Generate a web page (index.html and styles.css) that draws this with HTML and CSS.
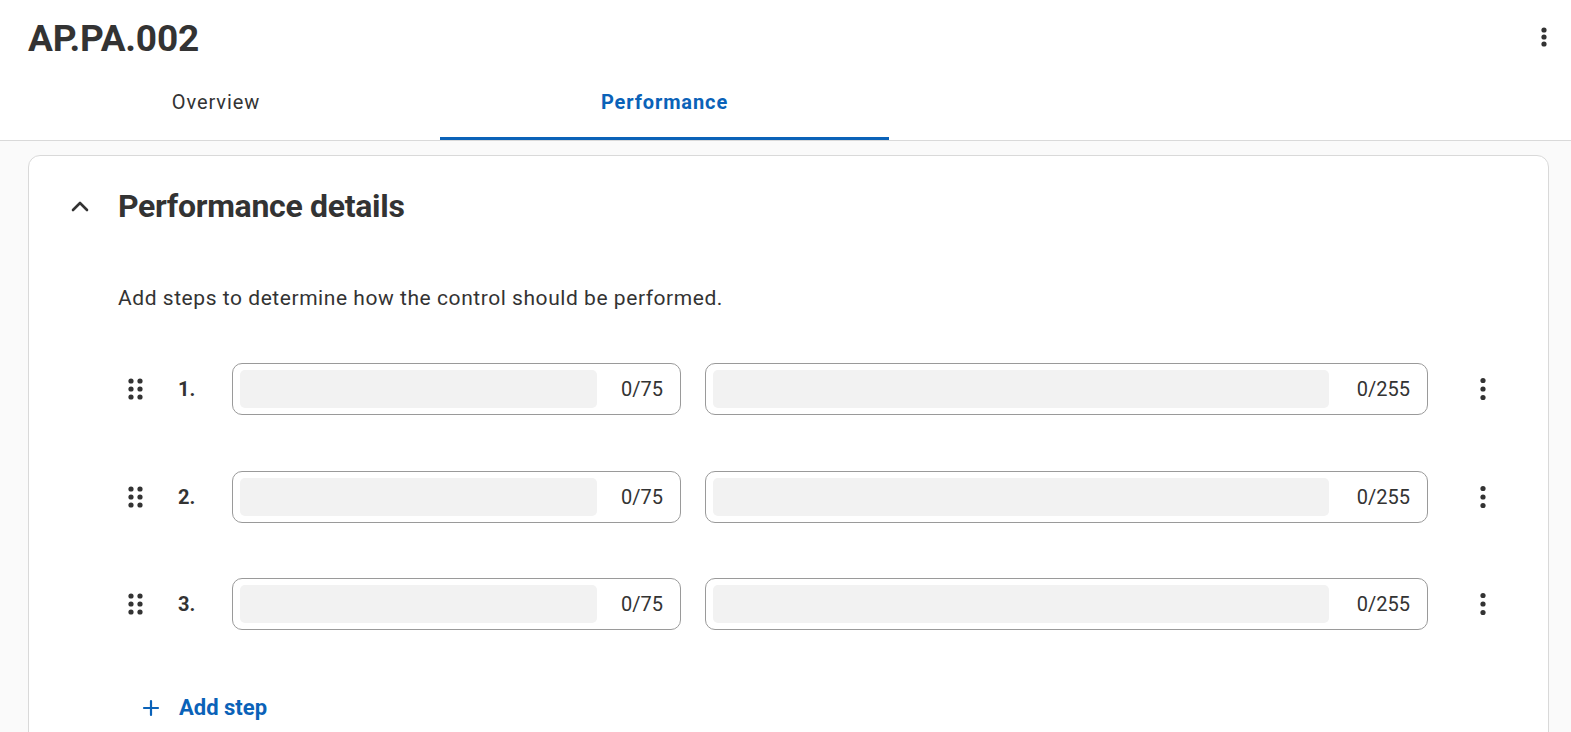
FILE: index.html
```html
<!DOCTYPE html>
<html lang="en">
<head>
<meta charset="utf-8">
<title>AP.PA.002</title>
<link rel="stylesheet" href="styles.css">
</head>
<body>
<header class="page-head">
  <div class="title-row">
    <h1 class="title">AP.PA.002</h1>
    <button class="icon-btn kebab-top" aria-label="More">
      <svg width="24" height="24" viewBox="0 0 24 24"><circle cx="12" cy="5" r="2.6"/><circle cx="12" cy="12" r="2.6"/><circle cx="12" cy="19" r="2.6"/></svg>
    </button>
  </div>
  <nav class="tabs">
    <div class="tab tab-overview">Overview</div>
    <div class="tab tab-active">Performance</div>
  </nav>
</header>
<main class="content">
  <section class="card">
    <div class="card-head">
      <span class="chevron">
        <svg width="24" height="24" viewBox="0 0 24 24"><path d="M5 16 L12 9 L19 16" fill="none" stroke="#333" stroke-width="2.6" stroke-linecap="round" stroke-linejoin="round"/></svg>
      </span>
      <h2 class="card-title">Performance details</h2>
    </div>
    <p class="desc">Add steps to determine how the control should be performed.</p>
    <div class="steps">
      <div class="step">
        <span class="handle"><svg width="20" height="26" viewBox="0 0 20 26"><circle cx="5" cy="5" r="2.6"/><circle cx="14" cy="5" r="2.6"/><circle cx="5" cy="13" r="2.6"/><circle cx="14" cy="13" r="2.6"/><circle cx="5" cy="21" r="2.6"/><circle cx="14" cy="21" r="2.6"/></svg></span>
        <span class="num">1.</span>
        <div class="field field-name"><span class="fill"></span><span class="count">0/75</span></div>
        <div class="field field-desc"><span class="fill"></span><span class="count">0/255</span></div>
        <span class="row-kebab"><svg width="24" height="26" viewBox="0 0 24 26"><circle cx="12" cy="4.5" r="2.6"/><circle cx="12" cy="13" r="2.6"/><circle cx="12" cy="21.5" r="2.6"/></svg></span>
      </div>
      <div class="step">
        <span class="handle"><svg width="20" height="26" viewBox="0 0 20 26"><circle cx="5" cy="5" r="2.6"/><circle cx="14" cy="5" r="2.6"/><circle cx="5" cy="13" r="2.6"/><circle cx="14" cy="13" r="2.6"/><circle cx="5" cy="21" r="2.6"/><circle cx="14" cy="21" r="2.6"/></svg></span>
        <span class="num">2.</span>
        <div class="field field-name"><span class="fill"></span><span class="count">0/75</span></div>
        <div class="field field-desc"><span class="fill"></span><span class="count">0/255</span></div>
        <span class="row-kebab"><svg width="24" height="26" viewBox="0 0 24 26"><circle cx="12" cy="4.5" r="2.6"/><circle cx="12" cy="13" r="2.6"/><circle cx="12" cy="21.5" r="2.6"/></svg></span>
      </div>
      <div class="step">
        <span class="handle"><svg width="20" height="26" viewBox="0 0 20 26"><circle cx="5" cy="5" r="2.6"/><circle cx="14" cy="5" r="2.6"/><circle cx="5" cy="13" r="2.6"/><circle cx="14" cy="13" r="2.6"/><circle cx="5" cy="21" r="2.6"/><circle cx="14" cy="21" r="2.6"/></svg></span>
        <span class="num">3.</span>
        <div class="field field-name"><span class="fill"></span><span class="count">0/75</span></div>
        <div class="field field-desc"><span class="fill"></span><span class="count">0/255</span></div>
        <span class="row-kebab"><svg width="24" height="26" viewBox="0 0 24 26"><circle cx="12" cy="4.5" r="2.6"/><circle cx="12" cy="13" r="2.6"/><circle cx="12" cy="21.5" r="2.6"/></svg></span>
      </div>
    </div>
    <button class="add-step">
      <svg width="18" height="18" viewBox="0 0 18 18"><path d="M9 2 V16 M2 9 H16" stroke="#0a62b8" stroke-width="2.2" stroke-linecap="round"/></svg>
      <span>Add step</span>
    </button>
  </section>
</main>
</body>
</html>
```

FILE: styles.css
```css
* { box-sizing: border-box; }
html, body { margin: 0; padding: 0; }
body {
  font-family: Roboto, "Liberation Sans", Arial, sans-serif;
  color: #333;
  background: #fafafa;
  height: 732px;
  overflow: hidden;
}
.page-head {
  background: #fff;
  border-bottom: 1px solid #d9d9d9;
}
.title-row {
  display: flex;
  align-items: center;
  justify-content: space-between;
  padding: 14px 15px 0 28px;
  height: 64px;
}
.title {
  margin: 0;
  font-size: 37px;
  line-height: 44px;
  font-weight: 700;
  letter-spacing: -0.2px;
  color: #333;
}
.icon-btn {
  border: 0;
  background: none;
  padding: 0;
  width: 24px;
  height: 24px;
  fill: #333;
  margin-top: -4px;
}
.tabs {
  display: flex;
  height: 76px;
  gap: 8px;
}
.tab {
  display: flex;
  align-items: center;
  justify-content: center;
  font-size: 20px;
  letter-spacing: 0.9px;
  color: #333;
  border-bottom: 3px solid transparent;
  padding-top: 2px;
}
.tab-overview { width: 432px; }
.tab-active {
  width: 449px;
  color: #0a62b8;
  font-weight: 700;
  border-bottom-color: #0a62b8;
}
.content {
  padding: 14px 22px 0 28px;
}
.card {
  background: #fff;
  border: 1px solid #d9d9d9;
  border-radius: 12px;
  padding: 30px 0 40px 39px;
  min-height: 600px;
}
.card-head {
  display: flex;
  align-items: center;
  gap: 26px;
  height: 40px;
}
.chevron { width: 24px; height: 24px; display: block; }
.chevron svg { display: block; }
.card-title {
  margin: 0;
  font-size: 32px;
  line-height: 40px;
  font-weight: 700;
  letter-spacing: -0.3px;
  color: #333;
}
.desc {
  margin: 60px 0 0 50px;
  font-size: 21px;
  line-height: 24px;
  letter-spacing: 0.55px;
  color: #333;
}
.steps {
  margin-top: 53px;
  display: flex;
  flex-direction: column;
  gap: 55.5px;
}
.step {
  display: flex;
  align-items: center;
  height: 52px;
  padding-left: 50px;
}
.handle {
  width: 36px;
  flex-shrink: 0;
  display: flex;
  justify-content: center;
  fill: #333;
}
.handle svg, .row-kebab svg { display: block; }
.num {
  width: 78px;
  flex-shrink: 0;
  padding-left: 24px;
  font-size: 20px;
  font-weight: 700;
  color: #333;
}
.field {
  flex-shrink: 0;
  height: 52px;
  border: 1px solid #9a9a9a;
  border-radius: 10px;
  display: flex;
  align-items: center;
  padding: 6px 17px 6px 7px;
}
.field-name { width: 449px; }
.field-desc { width: 723px; margin-left: 24px; }
.fill {
  flex: 1;
  align-self: stretch;
  background: #f2f2f2;
  border-radius: 5px;
}
.count {
  margin-left: 24px;
  font-size: 20px;
  color: #333;
}
.field-desc .count { margin-left: 28px; }
.row-kebab {
  margin-left: 43px;
  width: 24px;
  flex-shrink: 0;
  fill: #333;
}
.add-step {
  margin: 66px 0 0 74px;
  display: flex;
  align-items: center;
  gap: 19px;
  border: 0;
  background: none;
  padding: 0;
  font-family: inherit;
  font-size: 22px;
  font-weight: 700;
  color: #0a62b8;
  line-height: 24px;
}
.add-step svg { display: block; }
```
